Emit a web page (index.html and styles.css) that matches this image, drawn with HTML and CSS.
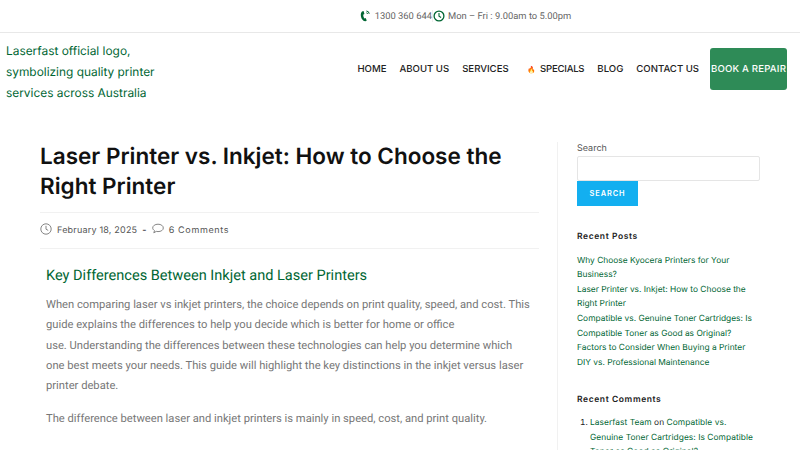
FILE: index.html
```html
<!DOCTYPE html>
<html lang="en">
<head>
    <meta charset="UTF-8">
    <meta name="viewport" content="width=device-width, initial-scale=1.0">
    <title>Laser Printer vs. Inkjet: How to Choose the Right Printer</title>
    <link rel="stylesheet" href="styles.css">
</head>
<body>
    <div class="top-bar">
        <span class="top-item top-phone">
            <svg viewBox="0 0 11 12" width="11" height="12"><path d="M2 1.6 L3.6 1 L4.4 4 L3.2 4.8 C3.2 6.2 3.6 7.4 4.3 8.4 L5.6 8 L6.8 10.4 L5.5 11.2 C3.2 11.6 0.8 8.4 0.8 5 C0.8 3.6 1.2 2.4 2 1.6 Z" fill="#006633"/><path d="M6.4 1 A3 3 0 0 1 9.2 3.8 M6.4 2.8 A1.3 1.3 0 0 1 7.6 3.9" fill="none" stroke="#006633" stroke-width="1"/></svg>
            1300 360 644
        </span>
        <span class="top-item">
            <svg viewBox="0 0 12 12" width="12" height="12"><circle cx="6" cy="6" r="4.9" fill="none" stroke="#006633" stroke-width="1.3"/><path d="M6 3 V6.2 L8.1 7.5" fill="none" stroke="#006633" stroke-width="1.1"/></svg>
            Mon – Fri : 9.00am to 5.00pm
        </span>
    </div>

    <header class="site-header">
        <a class="logo-text" href="#">Laserfast official logo, symbolizing quality printer services across Australia</a>
        <nav class="main-nav">
            <a href="#">HOME</a>
            <a href="#">ABOUT US</a>
            <a class="nav-services" href="#">SERVICES</a>
            <a class="nav-specials" href="#"><span class="fire">🔥</span>SPECIALS</a>
            <a href="#">BLOG</a>
            <a href="#">CONTACT US</a>
            <a class="btn-repair" href="#">BOOK A REPAIR</a>
        </nav>
    </header>

    <div class="content-wrap">
        <main class="post">
            <h1 class="post-title">Laser Printer vs. Inkjet: How to Choose the Right Printer</h1>
            <div class="post-meta">
                <span class="meta-item">
                    <svg viewBox="0 0 12 12" width="12" height="12"><circle cx="6" cy="6" r="5.2" fill="none" stroke="#777" stroke-width="0.9"/><path d="M6 2.8 V6.2 L8.2 7.4" fill="none" stroke="#777" stroke-width="0.9"/></svg>
                    <span>February 18, 2025</span>
                </span>
                <span class="meta-dash">-</span>
                <span class="meta-item">
                    <svg viewBox="0 0 12 12" width="12" height="12"><path d="M6 1.2 C9 1.2 11.3 2.8 11.3 5 C11.3 7.2 9 8.6 6 8.6 C5.4 8.6 4.8 8.5 4.3 8.4 L1.8 9.8 L2.5 7.6 C1.4 6.9 0.7 6 0.7 5 C0.7 2.8 3 1.2 6 1.2 Z" fill="none" stroke="#777" stroke-width="0.9"/></svg>
                    <span class="meta-comments">6 Comments</span>
                </span>
            </div>
            <div class="post-body">
                <h2>Key Differences Between Inkjet and Laser Printers</h2>
                <p>When comparing laser vs inkjet printers, the choice depends on print quality, speed, and cost. This guide explains the differences to help you decide which is better for home or office use.&nbsp;Understanding the differences between these technologies can help you determine which one best meets your needs. This guide will highlight the key distinctions in the inkjet versus laser printer debate.</p>
                <p>The difference between laser and inkjet printers is mainly in speed, cost, and print quality.</p>
            </div>
        </main>

        <aside class="sidebar">
            <label class="search-label" for="s">Search</label>
            <input class="search-input" id="s" type="text">
            <button class="search-btn">SEARCH</button>

            <h4 class="widget-title">Recent Posts</h4>
            <ul class="post-links">
                <li><a href="#">Why Choose Kyocera Printers for Your Business?</a></li>
                <li><a href="#">Laser Printer vs. Inkjet: How to Choose the Right Printer</a></li>
                <li><a href="#">Compatible vs. Genuine Toner Cartridges: Is Compatible Toner as Good as Original?</a></li>
                <li><a href="#">Factors to Consider When Buying a Printer</a></li>
                <li><a href="#">DIY vs. Professional Maintenance</a></li>
            </ul>

            <h4 class="widget-title widget-comments">Recent Comments</h4>
            <ol class="comment-links">
                <li><a href="#">Laserfast Team</a> on <a href="#">Compatible vs. Genuine Toner Cartridges: Is Compatible Toner as Good as Original?</a></li>
            </ol>
        </aside>
    </div>
</body>
</html>
```

FILE: styles.css
```css
* {
    margin: 0;
    padding: 0;
    box-sizing: border-box;
}

html, body {
    height: 450px;
    overflow: hidden;
}

body {
    font-family: Inter, "Open Sans", sans-serif;
    background: white;
    color: #333;
    text-rendering: geometricPrecision;
}

a {
    text-decoration: none;
    color: inherit;
}

.top-bar {
    height: 33px;
    border-bottom: 1px solid #e8e8e8;
    display: flex;
    justify-content: center;
    align-items: center;
    padding-left: 131px;
    font-family: Roboto, sans-serif;
    font-size: 9.4px;
    color: #666;
}

.top-item {
    display: flex;
    align-items: center;
    gap: 3px;
}

.top-phone {
    gap: 4px;
    border-right: 1px solid #eee;
    line-height: 9px;
}

.site-header {
    height: 72px;
    display: flex;
    justify-content: space-between;
    align-items: center;
    padding: 0 13px 0 6px;
}

.logo-text {
    width: 155px;
    padding-top: 4px;
    font-size: 11.9px;
    line-height: 21px;
    color: #006633;
}

.main-nav {
    display: flex;
    align-items: center;
    gap: 13px;
    font-size: 9.6px;
    font-weight: 500;
    color: #222;
}

.nav-services {
    margin-right: 6px;
}

.nav-specials {
    display: flex;
    align-items: center;
    gap: 4px;
    letter-spacing: -0.25px;
}

.fire {
    font-size: 7px;
}

.btn-repair {
    width: 77px;
    height: 42px;
    margin-left: -2px;
    background: #2e8b57;
    border-radius: 3px;
    color: white;
    letter-spacing: 0.2px;
    display: flex;
    align-items: center;
    justify-content: center;
    white-space: nowrap;
}

.content-wrap {
    display: flex;
    padding: 37px 40px 0;
}

.post {
    width: 518px;
    padding-right: 18px;
    border-right: 1px solid #f1f1f1;
}

.post-title {
    font-size: 22.5px;
    font-weight: 600;
    line-height: 30px;
    color: #111;
    padding-bottom: 10px;
    border-bottom: 1px solid #f1f1f1;
}

.post-meta {
    height: 36px;
    display: flex;
    align-items: center;
    gap: 5px;
    font-size: 9px;
    letter-spacing: 0.2px;
    color: #555;
    border-bottom: 1px solid #f1f1f1;
}

.meta-item {
    display: flex;
    align-items: center;
    gap: 5px;
}

.meta-item svg {
    margin-top: -3px;
}

.meta-dash {
    font-weight: 700;
}

.meta-comments {
    letter-spacing: 0.65px;
}

.post-body {
    padding: 17px 6px 0;
    font-family: Roboto, sans-serif;
    color: #777;
}

.post-body h2 {
    font-size: 14.55px;
    font-weight: 400;
    line-height: 20px;
    color: #006633;
    margin-bottom: 9px;
}

.post-body p {
    font-size: 11.2px;
    line-height: 20.25px;
    margin-bottom: 12.5px;
}

.sidebar {
    width: 183px;
    margin-left: 19px;
    font-size: 8.4px;
    line-height: 14.6px;
}

.search-label {
    display: block;
    font-size: 9px;
    color: #555;
    line-height: 14px;
}

.search-input {
    display: block;
    width: 183px;
    height: 25px;
    border: 1px solid #e5e5e5;
    border-radius: 2px;
}

.search-btn {
    display: block;
    width: 61px;
    height: 25px;
    background: #13aff0;
    border: none;
    color: white;
    font-family: inherit;
    font-size: 7.4px;
    font-weight: 600;
    letter-spacing: 0.9px;
}

.widget-title {
    font-size: 8.5px;
    font-weight: 600;
    letter-spacing: 0.6px;
    color: #222;
    margin: 24px 0 9px;
}

.widget-comments {
    margin: 23px 0 8px;
}

.post-links {
    list-style: none;
    color: #006633;
}

.comment-links {
    padding: 0 6px 0 13px;
    letter-spacing: 0.05px;
    color: #222;
}

.comment-links a {
    color: #006633;
}
```
